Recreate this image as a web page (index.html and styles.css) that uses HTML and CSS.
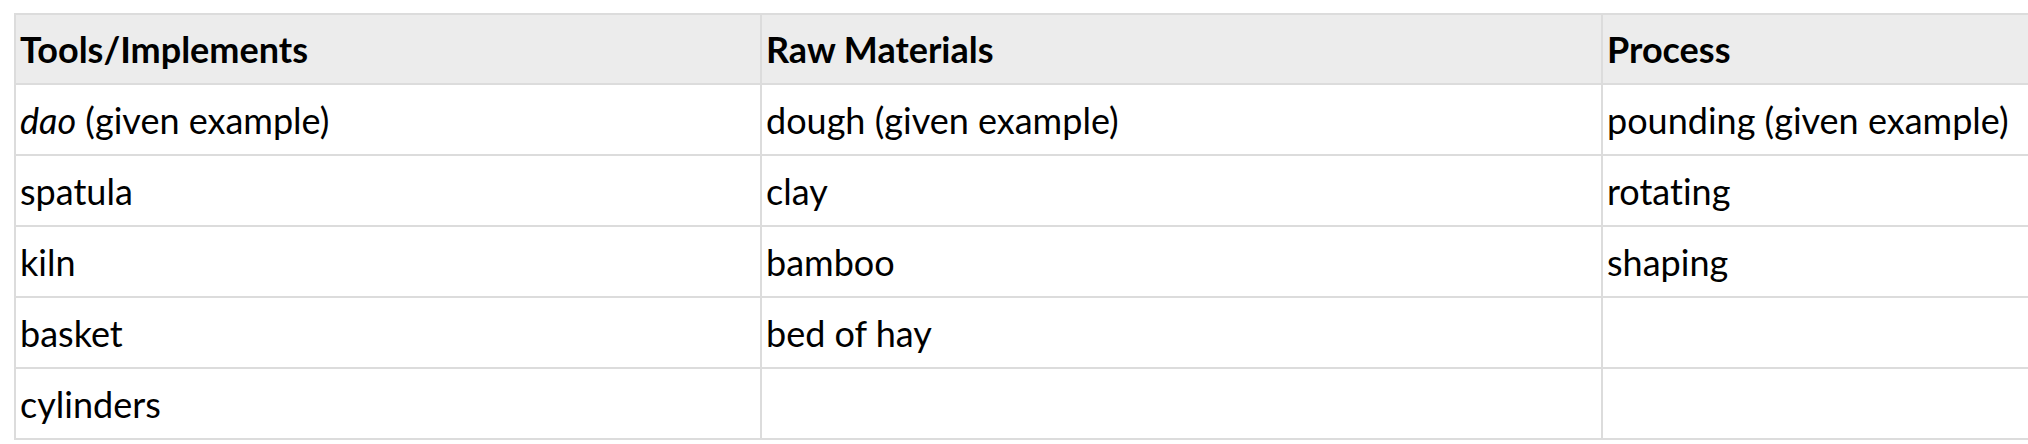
FILE: index.html
```html
<!DOCTYPE html>
<html>
<head>
<meta charset="utf-8">
<link rel="stylesheet" href="styles.css">
</head>
<body>
<div class="wrap">
<table class="grid">
  <colgroup>
    <col class="c1"><col class="c2"><col class="c3">
  </colgroup>
  <thead>
    <tr><th>Tools/Implements</th><th>Raw Materials</th><th>Process</th></tr>
  </thead>
  <tbody>
    <tr><td><em>dao</em> (given example)</td><td>dough (given example)</td><td>pounding (given example)</td></tr>
    <tr><td>spatula</td><td>clay</td><td>rotating</td></tr>
    <tr><td>kiln</td><td>bamboo</td><td>shaping</td></tr>
    <tr><td>basket</td><td>bed of hay</td><td></td></tr>
    <tr><td>cylinders</td><td></td><td></td></tr>
  </tbody>
</table>
</div>
</body>
</html>
```

FILE: styles.css
```css
html, body {
  margin: 0;
  padding: 0;
  background: #fff;
  overflow: hidden;
}
.wrap {
  padding: 13px 0 0 14px;
  width: 2400px;
}
.grid {
  border-collapse: collapse;
  table-layout: fixed;
  width: 2200px;
  font-family: Lato, "Liberation Sans", sans-serif;
  font-size: 36px;
  color: #000;
  font-variant-ligatures: no-common-ligatures;
}
.c1 { width: 746px; }
.c2 { width: 841px; }
.c3 { width: 613px; }
.grid th, .grid td {
  border: 2px solid #dcdcdc;
  height: 71px;
  padding: 0 4px;
  text-align: left;
  vertical-align: middle;
  box-sizing: border-box;
}
.grid th {
  background: #ececec;
  font-weight: 700;
  height: 70px;
}
.grid em { font-style: italic; }
```
